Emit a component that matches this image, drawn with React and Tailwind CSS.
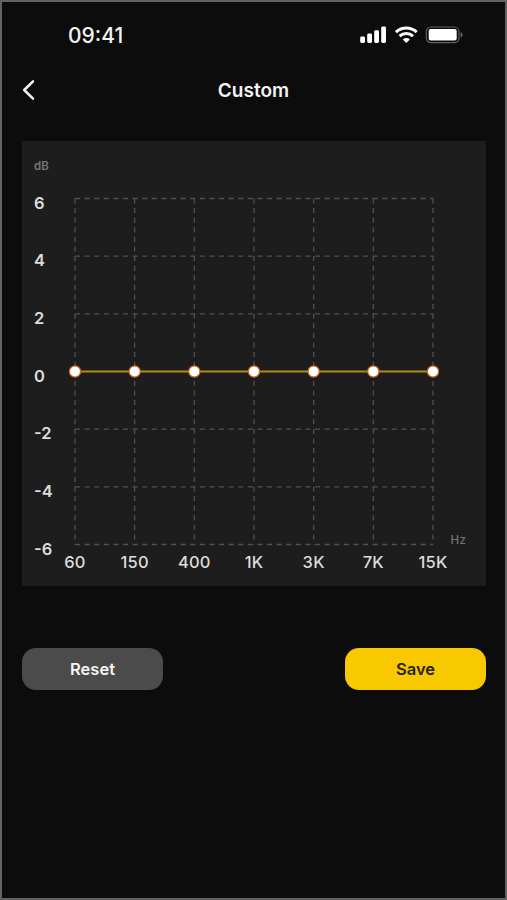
import React, { useState } from 'react';

const BANDS = ['60', '150', '400', '1K', '3K', '7K', '15K'];
const LEVELS = [6, 4, 2, 0, -2, -4, -6];

// plot area inside the chart card
const PLOT = { left: 53, right: 411, top: 57.5, bottom: 403.5 };

const bandX = (i) => PLOT.left + (i * (PLOT.right - PLOT.left)) / (BANDS.length - 1);
const levelY = (db) => PLOT.top + ((6 - db) * (PLOT.bottom - PLOT.top)) / 12;

const StatusBar = () => (
  <div className="flex items-center justify-between h-[66px] pl-[66px] pr-[42px]">
    <span className="text-[21px] leading-none font-[550] text-[#f2f2f2]">09:41</span>
    <div className="flex items-center">
      <svg width="27" height="18" viewBox="0 0 27 18" fill="#fff">
        <rect x="0.2" y="10.6" width="4.8" height="6.4" rx="1.4" />
        <rect x="7.2" y="7.6" width="4.8" height="9.4" rx="1.4" />
        <rect x="14.2" y="4.2" width="4.8" height="12.8" rx="1.4" />
        <rect x="21.2" y="0.6" width="4.8" height="16.4" rx="1.4" />
      </svg>
      <svg className="ml-[8px]" width="23" height="18" viewBox="0 0 23 18" fill="none" stroke="#fff" strokeWidth="3">
        <path d="M0.9 6.1a15.2 15.2 0 0 1 20.8 0" />
        <path d="M4.6 10.2a9.7 9.7 0 0 1 13.4 0" />
        <path d="M11.3 17 7.8 13.4a5.1 5.1 0 0 1 7 0z" fill="#fff" stroke="none" />
      </svg>
      <svg className="ml-[7px]" width="38" height="18" viewBox="0 0 38 18">
        <rect x="1.3" y="1" width="32.7" height="15.6" rx="4.6" fill="none" stroke="#606060" strokeWidth="1.2" />
        <rect x="3.7" y="3.1" width="28" height="11.5" rx="2" fill="#fff" />
        <path d="M35.7 6.2v5.2c1.3-.5 1.9-1.4 1.9-2.6s-.6-2.1-1.9-2.6z" fill="#666" />
      </svg>
    </div>
  </div>
);

const EqualizerChart = ({ gains }) => (
  <svg className="block" width="464" height="445" viewBox="0 0 464 445">
    <g stroke="#505050" strokeWidth="1.3" strokeDasharray="5 4.6" fill="none">
      {LEVELS.filter((db) => db !== 0).map((db) => (
        <line key={db} x1={PLOT.left} x2={PLOT.right} y1={levelY(db)} y2={levelY(db)} />
      ))}
      {BANDS.map((band, i) => (
        <line key={band} x1={bandX(i)} x2={bandX(i)} y1={PLOT.top} y2={PLOT.bottom} />
      ))}
    </g>

    <g fontSize="11.5" fill="#757575">
      <text x="12" y="29" fontWeight="600">dB</text>
      <text x="428.5" y="403" fontWeight="500" letterSpacing="0.4">Hz</text>
    </g>
    <g fontSize="16.5" fontWeight="600" fill="#dcdcdc">
      {LEVELS.map((db) => (
        <text key={db} x="12" y={levelY(db) + 10}>{db}</text>
      ))}
    </g>
    <g fontSize="16.5" fontWeight="550" fill="#dcdcdc" textAnchor="middle" letterSpacing="0.2">
      {BANDS.map((band, i) => (
        <text key={band} x={bandX(i)} y="427">{band}</text>
      ))}
    </g>

    <polyline
      points={gains.map((g, i) => `${bandX(i)},${levelY(g)}`).join(' ')}
      fill="none"
      stroke="#b08c18"
      strokeWidth="1.8"
    />
    {gains.map((g, i) => (
      <circle key={BANDS[i]} cx={bandX(i)} cy={levelY(g)} r="5.6" fill="#fff" stroke="#c8661c" strokeWidth="1.2" />
    ))}
  </svg>
);

const App = () => {
  const [gains, setGains] = useState(BANDS.map(() => 0));

  return (
    <div className="h-[900px] w-[507px] border-2 border-[#626262] bg-[#0c0c0c] font-['Inter',sans-serif]">
      <StatusBar />

      <header className="mt-[2px] grid grid-cols-[40px_1fr_40px] items-center h-10 px-5">
        <button aria-label="Back">
          <svg width="14" height="22" viewBox="0 0 14 22" fill="none" stroke="#f2f2f2" strokeWidth="2.5" strokeLinecap="round" strokeLinejoin="round">
            <path d="M11 2.3 2.2 11l8.8 8.7" />
          </svg>
        </button>
        <h1 className="text-center text-[19px] leading-none font-semibold text-[#f4f4f4]">Custom</h1>
      </header>

      <main className="mt-[31px] ml-5 w-[464px]">
        <div className="bg-[#1d1d1d]">
          <EqualizerChart gains={gains} />
        </div>

        <div className="mt-[62px] flex justify-between">
          <button
            onClick={() => setGains(BANDS.map(() => 0))}
            className="h-[42px] w-[141px] rounded-[14px] bg-[#4b4b4b] text-[16.5px] font-semibold text-[#f4f4f4]"
          >
            Reset
          </button>
          <button className="h-[42px] w-[141px] rounded-[14px] bg-[#f8c800] text-[16.5px] font-semibold text-[#29220a]">
            Save
          </button>
        </div>
      </main>
    </div>
  );
};

export default App;
